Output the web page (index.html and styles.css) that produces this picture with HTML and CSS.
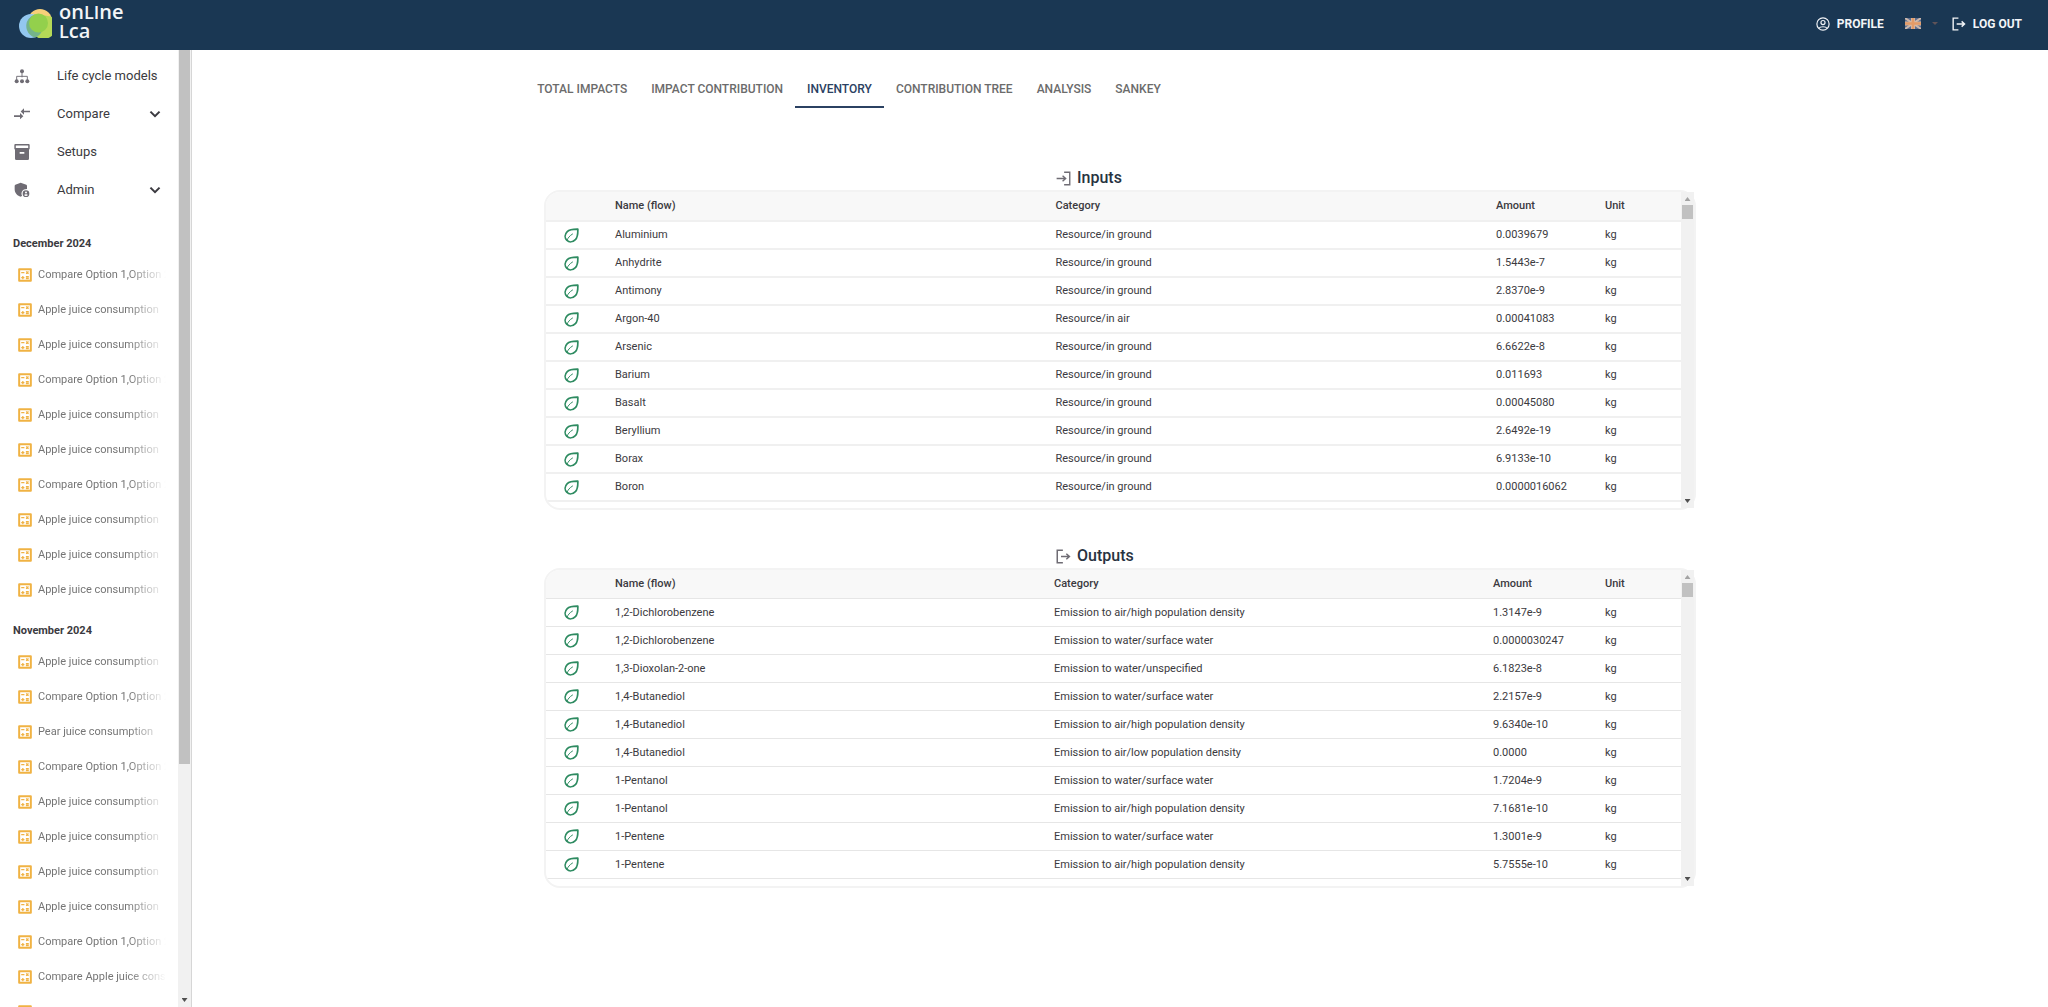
FILE: index.html
```html
<!DOCTYPE html>
<html lang="en">
<head>
<meta charset="utf-8">
<meta name="viewport" content="width=device-width, initial-scale=1">
<title>Online LCA – Inventory</title>
<link rel="stylesheet" href="styles.css">
</head>
<body>
<svg class="sprite" aria-hidden="true">
  <symbol id="i-tree" viewBox="0 0 24 24"><path d="M12 6v8M4 19v-6.500h16V19" fill="none" stroke="currentColor" stroke-width="1.400"/><circle cx="12" cy="5" r="3"/><circle cx="4" cy="20" r="3"/><circle cx="12" cy="20" r="3"/><circle cx="20" cy="20" r="3"/></symbol>
  <symbol id="i-compare" viewBox="0 0 24 24"><path d="M9 14H0v2.500h9V20l5-4.800L9 10.500zM15 13V9.500h9V7h-9V3.500l-5 4.800z"/></symbol>
  <symbol id="i-archive" viewBox="0 0 24 24"><path fill-rule="evenodd" d="M2 0h20a1.500 1.500 0 0 1 1.500 1.500V7a1.500 1.500 0 0 1-1 1.400V22a2 2 0 0 1-2 2h-17a2 2 0 0 1-2-2V8.400A1.500 1.500 0 0 1 .5 7V1.500A1.500 1.500 0 0 1 2 0zm.7 2.300V6h18.600V2.300zM8.500 12v2.500h7V12z"/></symbol>
  <symbol id="i-admin" viewBox="0 0 24 24"><path d="M10 1 2 4Q1 4.500 1 6v5c0 5 3.500 9.500 8.500 11 1.300-.3 2-.6 2.700-1-2.500-5 .3-10.500 7.300-10.500V6q0-1.500-1-2z"/><path fill-rule="evenodd" d="M18 12.500a5 5 0 1 0 0 10 5 5 0 0 0 0-10zm0 1.700a1.500 1.500 0 1 1 0 3 1.500 1.500 0 0 1 0-3zm0 6.800c-1.200 0-2.200-.6-2.800-1.500.1-.9 1.900-1.300 2.800-1.300s2.700.4 2.800 1.300c-.6.9-1.600 1.500-2.800 1.500z"/></symbol>
  <symbol id="i-chevron" viewBox="0 0 10 10"><path d="M1.200 3 5 6.800 8.800 3" fill="none" stroke="currentColor" stroke-width="1.700"/></symbol>
  <symbol id="i-calc" viewBox="0 0 24 24"><path d="M2 2h20v20H2z" fill="none" stroke="currentColor" stroke-width="3.400" stroke-linejoin="round"/><path d="M5.500 8h5.500M13.500 15h5M13.500 18h5M5.500 16.500H11M8.300 13.700v5.600M14 6l4 4M18 6l-4 4" fill="none" stroke="currentColor" stroke-width="2.200"/></symbol>
  <symbol id="i-leaf" viewBox="1 1 22 22"><path d="M21.300 2.700C14 2.600 9 3 5.800 6.200 1.800 10.200 1.800 15.500 5 18.800c3.500 3.400 8.800 3.200 12.700-.6 3.200-3.200 3.800-8.200 3.600-15.500z" fill="none" stroke="currentColor" stroke-width="2.500" stroke-linejoin="round"/><path d="M5.300 19.500C6.800 15.500 9 12.500 14 9.500" fill="none" stroke="currentColor" stroke-width="1.400"/></symbol>
  <symbol id="i-user" viewBox="0 0 24 24"><g fill="none" stroke="currentColor" stroke-width="2"><circle cx="12" cy="12" r="10.500"/><circle cx="12" cy="9.500" r="3.500"/><path d="M5 19.500c2-3.700 12-3.700 14 0"/></g></symbol>
  <symbol id="i-out" viewBox="0 0 24 24"><path d="M11 2H2v20h9M8 12h13M16.500 7.500 21.500 12l-5 4.500" fill="none" stroke="currentColor" stroke-width="2.400"/></symbol>
  <symbol id="i-in" viewBox="0 0 24 24"><path d="M13 2h9v20h-9M1 12h14M10.500 7.500 15.500 12l-5 4.500" fill="none" stroke="currentColor" stroke-width="2.200"/></symbol>
</svg>

<header class="topbar">
  <a class="brand" href="#">
    <svg class="brand-mark" viewBox="0 0 33 29" aria-hidden="true">
      <circle cx="21" cy="12" r="12" fill="#f6cf79"/>
      <circle cx="12" cy="17" r="12" fill="#93c7ef"/>
      <path d="M32 7.500a12 12 0 0 1-15 20l2-22z" fill="#b5d957"/>
      <path d="M9.500 10A12 12 0 0 0 16 28.500 12 12 0 0 0 23 12a12 12 0 0 0-7-6.500 12 12 0 0 0-6.500 4.500z" fill="#74b38a"/>
      <circle cx="19.500" cy="14" r="9.500" fill="#93d04c"/>
    </svg>
    <span class="brand-name">on<small>LI</small>ne<br><small>L</small>ca</span>
  </a>
  <nav class="account">
    <a class="account-link" href="#"><svg class="icon"><use href="#i-user"/></svg>PROFILE</a>
    <button class="language" type="button" aria-label="Language: English" aria-haspopup="true">
      <svg class="flag" viewBox="0 0 16 11"><path fill="#5c6c8e" d="M0 0h16v11H0z"/><path d="m0 0 16 11M16 0 0 11" stroke="#cdb8ab" stroke-width="2"/><path d="M8 0v11M0 5.500h16" stroke="#d8b9a2" stroke-width="4"/><path d="M8 0v11M0 5.500h16" stroke="#e39b67" stroke-width="2.500"/></svg>
      <svg class="caret" viewBox="0 0 6 3"><path d="M0 0h6L3 3z"/></svg>
    </button>
    <a class="account-link" href="#"><svg class="icon"><use href="#i-out"/></svg>LOG OUT</a>
  </nav>
</header>

<div class="layout">
  <aside class="sidebar">
    <div class="sidebar-body">
      <nav class="menu">
        <a href="#"><svg class="icon"><use href="#i-tree"/></svg><span>Life cycle models</span></a>
        <a href="#"><svg class="icon"><use href="#i-compare"/></svg><span>Compare</span><svg class="chevron"><use href="#i-chevron"/></svg></a>
        <a href="#"><svg class="icon"><use href="#i-archive"/></svg><span>Setups</span></a>
        <a href="#"><svg class="icon"><use href="#i-admin"/></svg><span>Admin</span><svg class="chevron"><use href="#i-chevron"/></svg></a>
      </nav>
      <section class="history">
        <h2>December 2024</h2>
        <a href="#"><svg class="icon"><use href="#i-calc"/></svg><span>Compare Option 1,Option 2</span></a>
        <a href="#"><svg class="icon"><use href="#i-calc"/></svg><span>Apple juice consumption</span></a>
        <a href="#"><svg class="icon"><use href="#i-calc"/></svg><span>Apple juice consumption</span></a>
        <a href="#"><svg class="icon"><use href="#i-calc"/></svg><span>Compare Option 1,Option 2</span></a>
        <a href="#"><svg class="icon"><use href="#i-calc"/></svg><span>Apple juice consumption</span></a>
        <a href="#"><svg class="icon"><use href="#i-calc"/></svg><span>Apple juice consumption</span></a>
        <a href="#"><svg class="icon"><use href="#i-calc"/></svg><span>Compare Option 1,Option 2</span></a>
        <a href="#"><svg class="icon"><use href="#i-calc"/></svg><span>Apple juice consumption</span></a>
        <a href="#"><svg class="icon"><use href="#i-calc"/></svg><span>Apple juice consumption</span></a>
        <a href="#"><svg class="icon"><use href="#i-calc"/></svg><span>Apple juice consumption</span></a>
      </section>
      <section class="history">
        <h2>November 2024</h2>
        <a href="#"><svg class="icon"><use href="#i-calc"/></svg><span>Apple juice consumption</span></a>
        <a href="#"><svg class="icon"><use href="#i-calc"/></svg><span>Compare Option 1,Option 2</span></a>
        <a href="#"><svg class="icon"><use href="#i-calc"/></svg><span>Pear juice consumption</span></a>
        <a href="#"><svg class="icon"><use href="#i-calc"/></svg><span>Compare Option 1,Option 2</span></a>
        <a href="#"><svg class="icon"><use href="#i-calc"/></svg><span>Apple juice consumption</span></a>
        <a href="#"><svg class="icon"><use href="#i-calc"/></svg><span>Apple juice consumption</span></a>
        <a href="#"><svg class="icon"><use href="#i-calc"/></svg><span>Apple juice consumption</span></a>
        <a href="#"><svg class="icon"><use href="#i-calc"/></svg><span>Apple juice consumption</span></a>
        <a href="#"><svg class="icon"><use href="#i-calc"/></svg><span>Compare Option 1,Option 2</span></a>
        <a href="#"><svg class="icon"><use href="#i-calc"/></svg><span>Compare Apple juice consumption</span></a>
        <a href="#"><svg class="icon"><use href="#i-calc"/></svg></a>
      </section>
    </div>
    <div class="scrollbar" aria-hidden="true"><div class="thumb thumb-long"></div><div class="arrow arrow-down"></div></div>
  </aside>

  <main class="content">
    <nav class="tabs">
      <a href="#">TOTAL IMPACTS</a>
      <a href="#">IMPACT CONTRIBUTION</a>
      <a href="#" class="active" aria-current="page">INVENTORY</a>
      <a href="#">CONTRIBUTION TREE</a>
      <a href="#">ANALYSIS</a>
      <a href="#">SANKEY</a>
    </nav>

    <section class="flows flows-in">
      <h2><svg class="icon"><use href="#i-in"/></svg>Inputs</h2>
      <div class="card">
        <div class="card-body">
          <table>
            <colgroup><col class="c-icon"><col><col><col class="c-amount"><col class="c-unit"></colgroup>
            <thead><tr><th></th><th>Name (flow)</th><th>Category</th><th>Amount</th><th>Unit</th></tr></thead>
            <tbody>
              <tr><td><svg class="leaf"><use href="#i-leaf"/></svg></td><td>Aluminium</td><td>Resource/in ground</td><td>0.0039679</td><td>kg</td></tr>
              <tr><td><svg class="leaf"><use href="#i-leaf"/></svg></td><td>Anhydrite</td><td>Resource/in ground</td><td>1.5443e-7</td><td>kg</td></tr>
              <tr><td><svg class="leaf"><use href="#i-leaf"/></svg></td><td>Antimony</td><td>Resource/in ground</td><td>2.8370e-9</td><td>kg</td></tr>
              <tr><td><svg class="leaf"><use href="#i-leaf"/></svg></td><td>Argon-40</td><td>Resource/in air</td><td>0.00041083</td><td>kg</td></tr>
              <tr><td><svg class="leaf"><use href="#i-leaf"/></svg></td><td>Arsenic</td><td>Resource/in ground</td><td>6.6622e-8</td><td>kg</td></tr>
              <tr><td><svg class="leaf"><use href="#i-leaf"/></svg></td><td>Barium</td><td>Resource/in ground</td><td>0.011693</td><td>kg</td></tr>
              <tr><td><svg class="leaf"><use href="#i-leaf"/></svg></td><td>Basalt</td><td>Resource/in ground</td><td>0.00045080</td><td>kg</td></tr>
              <tr><td><svg class="leaf"><use href="#i-leaf"/></svg></td><td>Beryllium</td><td>Resource/in ground</td><td>2.6492e-19</td><td>kg</td></tr>
              <tr><td><svg class="leaf"><use href="#i-leaf"/></svg></td><td>Borax</td><td>Resource/in ground</td><td>6.9133e-10</td><td>kg</td></tr>
              <tr><td><svg class="leaf"><use href="#i-leaf"/></svg></td><td>Boron</td><td>Resource/in ground</td><td>0.0000016062</td><td>kg</td></tr>
            </tbody>
          </table>
        </div>
        <div class="scrollbar" aria-hidden="true"><div class="arrow arrow-up"></div><div class="thumb"></div><div class="arrow arrow-down"></div></div>
      </div>
    </section>

    <section class="flows flows-out">
      <h2><svg class="icon"><use href="#i-out"/></svg>Outputs</h2>
      <div class="card">
        <div class="card-body">
          <table>
            <colgroup><col class="c-icon"><col><col><col class="c-amount"><col class="c-unit"></colgroup>
            <thead><tr><th></th><th>Name (flow)</th><th>Category</th><th>Amount</th><th>Unit</th></tr></thead>
            <tbody>
              <tr><td><svg class="leaf"><use href="#i-leaf"/></svg></td><td>1,2-Dichlorobenzene</td><td>Emission to air/high population density</td><td>1.3147e-9</td><td>kg</td></tr>
              <tr><td><svg class="leaf"><use href="#i-leaf"/></svg></td><td>1,2-Dichlorobenzene</td><td>Emission to water/surface water</td><td>0.0000030247</td><td>kg</td></tr>
              <tr><td><svg class="leaf"><use href="#i-leaf"/></svg></td><td>1,3-Dioxolan-2-one</td><td>Emission to water/unspecified</td><td>6.1823e-8</td><td>kg</td></tr>
              <tr><td><svg class="leaf"><use href="#i-leaf"/></svg></td><td>1,4-Butanediol</td><td>Emission to water/surface water</td><td>2.2157e-9</td><td>kg</td></tr>
              <tr><td><svg class="leaf"><use href="#i-leaf"/></svg></td><td>1,4-Butanediol</td><td>Emission to air/high population density</td><td>9.6340e-10</td><td>kg</td></tr>
              <tr><td><svg class="leaf"><use href="#i-leaf"/></svg></td><td>1,4-Butanediol</td><td>Emission to air/low population density</td><td>0.0000</td><td>kg</td></tr>
              <tr><td><svg class="leaf"><use href="#i-leaf"/></svg></td><td>1-Pentanol</td><td>Emission to water/surface water</td><td>1.7204e-9</td><td>kg</td></tr>
              <tr><td><svg class="leaf"><use href="#i-leaf"/></svg></td><td>1-Pentanol</td><td>Emission to air/high population density</td><td>7.1681e-10</td><td>kg</td></tr>
              <tr><td><svg class="leaf"><use href="#i-leaf"/></svg></td><td>1-Pentene</td><td>Emission to water/surface water</td><td>1.3001e-9</td><td>kg</td></tr>
              <tr><td><svg class="leaf"><use href="#i-leaf"/></svg></td><td>1-Pentene</td><td>Emission to air/high population density</td><td>5.7555e-10</td><td>kg</td></tr>
            </tbody>
          </table>
        </div>
        <div class="scrollbar" aria-hidden="true"><div class="arrow arrow-up"></div><div class="thumb"></div><div class="arrow arrow-down"></div></div>
      </div>
    </section>
  </main>
</div>
</body>
</html>
```
FILE: styles.css
```css
* { box-sizing: border-box; }

body {
  margin: 0;
  height: 100vh;
  display: flex;
  flex-direction: column;
  overflow: hidden;
  background: #fff;
  color: #3b3a40;
  font: 11px/16px Roboto, "Liberation Sans", sans-serif;
}

a { color: inherit; text-decoration: none; }
svg { display: block; flex: none; fill: currentColor; }
.sprite { position: absolute; width: 0; height: 0; }

/* Top bar */
.topbar {
  flex: none;
  display: flex;
  align-items: center;
  justify-content: space-between;
  height: 50px;
  padding: 0 26px 0 19px;
  background: #1a3753;
  color: #f3f5f8;
}
.brand { display: flex; gap: 7px; align-items: center; }
.brand-mark { width: 33px; height: 29px; margin-bottom: 4px; }
.brand-name {
  padding-bottom: 8px;
  font: 600 20px/19px "Open Sans", "Noto Sans", sans-serif;
}
.brand-name small { font-size: 18px; line-height: 1; }
.account { display: flex; align-items: center; padding-bottom: 2px; font-weight: 700; font-size: 12px; }
.account-link { display: flex; align-items: center; gap: 7px; }
.account-link .icon { width: 14px; height: 14px; }
.language {
  display: flex;
  align-items: center;
  gap: 11px;
  margin: 0;
  padding: 0 14px 2px 21px;
  border: 0;
  background: none;
  color: #5f5358;
}
.flag { width: 16px; height: 11px; }
.caret { width: 6px; height: 3px; }

.layout { flex: 1; min-height: 0; display: flex; }

/* Sidebar */
.sidebar {
  flex: none;
  display: flex;
  width: 192px;
  border-right: 1px solid #d6d6d6;
}
.sidebar-body { flex: 1; min-width: 0; overflow: hidden; padding-top: 7px; }
.menu { margin-bottom: 11px; }
.menu a {
  display: flex;
  align-items: center;
  height: 38px;
  padding: 0 17px 0 14px;
  font-size: 13px;
}
.menu .icon { width: 16px; height: 16px; margin-right: 27px; color: #6f6c74; }
.menu span { flex: 1; white-space: nowrap; }
.chevron { width: 12px; height: 12px; }
.history h2 {
  margin: 0;
  padding: 16px 13px 5px;
  font-size: 11px;
  line-height: 16px;
  font-weight: 700;
}
.history a { display: flex; align-items: center; gap: 6px; height: 35px; padding: 0 12px 0 18px; color: #757575; }
.history .icon { width: 14px; height: 14px; color: #f0b243; }
.history span {
  flex: 1;
  overflow: hidden;
  white-space: nowrap;
  -webkit-mask-image: linear-gradient(to right, #000 70%, transparent);
  mask-image: linear-gradient(to right, #000 70%, transparent);
}

/* Scrollbars */
.scrollbar {
  flex: none;
  display: flex;
  flex-direction: column;
  align-items: center;
  width: 13px;
  padding: 5px 0;
  background: #f1f1f1;
}
.thumb { width: 11px; height: 14px; margin-top: 4px; background: #c1c1c1; }
.arrow { width: 6px; height: 4px; background: #505050; }
.arrow-up { clip-path: polygon(0 100%, 50% 0, 100% 100%); background: #a3a3a3; }
.arrow-down { clip-path: polygon(0 0, 100% 0, 50% 100%); margin-top: auto; }
.sidebar .scrollbar { padding-top: 0; }
.thumb-long { height: 75%; margin-top: 0; }

/* Content */
.content { flex: 1; min-width: 0; padding: 17px 24px; overflow: hidden; }
.tabs { display: flex; justify-content: center; margin-right: 542px; }
.tabs a {
  padding: 14px 12px 9px;
  border-bottom: 2px solid transparent;
  color: #6b6b6b;
  font-size: 12px;
  font-weight: 500;
  white-space: nowrap;
}
.tabs .active { color: #2b4162; border-color: #2b4162; }

.flows { max-width: 1152px; margin: 0 auto; }
.flows h2 {
  display: flex;
  align-items: center;
  gap: 6px;
  margin: 0;
  padding-left: 44%;
  padding-left: calc(400% / 9);
  color: #283341;
  font-size: 16px;
  line-height: 24px;
  font-weight: 500;
}
.flows h2 .icon { width: 15px; height: 15px; color: #6f6c74; }
.flows-in { padding-top: 58px; }
.flows-out { padding-top: 34px; }

.card { display: flex; height: 320px; border: 2px solid #f3f3f3; border-radius: 16px; }
.card-body { flex: 1; overflow: hidden; border-radius: 14px 0 0 14px; }
table { width: 100%; table-layout: fixed; border-collapse: separate; border-spacing: 0; }
.c-icon { width: 57px; }
.c-amount { width: 109px; }
.c-unit { width: 88px; }
.flows-out .c-amount { width: 112px; }
th, td {
  height: 28px;
  padding: 0 12px;
  border-bottom: 2px solid #f0f0f0;
  text-align: left;
  white-space: nowrap;
}
th { height: 30px; background: #f8f8f8; font-weight: 500; }
.flows-out th, .flows-out td { border-bottom: 1px solid #e6e6e6; }
.flows-out th { height: 29px; }
td:first-child { padding: 0 18px; }
.leaf { width: 15px; height: 15px; color: #2e8b61; }
```
